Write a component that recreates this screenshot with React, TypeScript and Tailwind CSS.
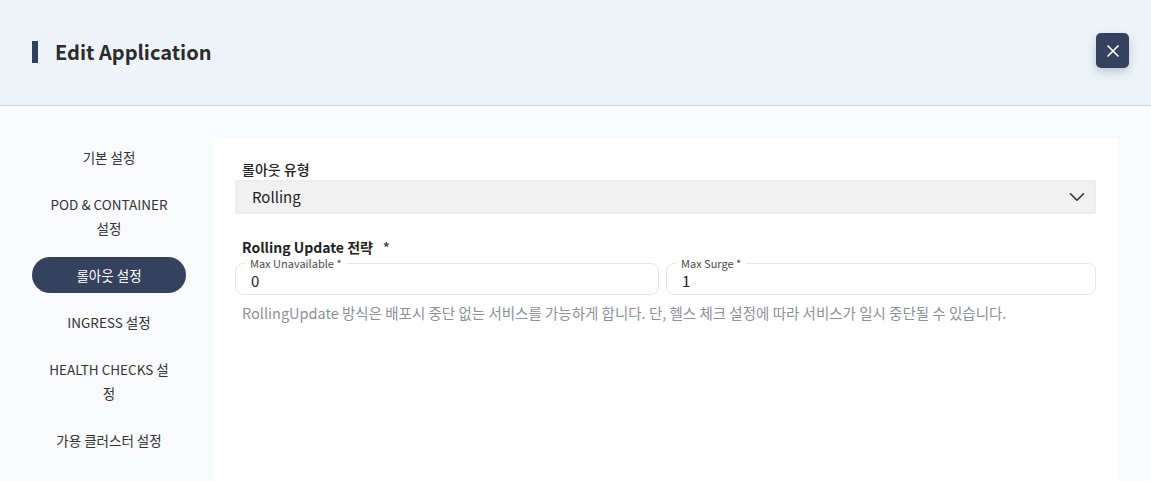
import { X, ChevronDown } from 'lucide-react';

const menu = [
  { label: '기본 설정' },
  { label: 'POD & CONTAINER 설정' },
  { label: '롤아웃 설정', active: true },
  { label: 'INGRESS 설정' },
  { label: 'HEALTH CHECKS 설정' },
  { label: '가용 클러스터 설정' },
];

function OutlinedField({ label, value, grow }: { label: string; value: string; grow: string }) {
  return (
    <div className={`relative ${grow} h-[32px] rounded-lg border border-[#e4e6ea] bg-white`}>
      <span className="absolute -top-[8px] left-[9px] px-[5px] bg-white text-[11px] leading-[14px] text-[#4a4a4a]">
        {label}
      </span>
      <div className="pl-[15px] pt-[7px] text-[15px] leading-[20px] text-[#222]">{value}</div>
    </div>
  );
}

export default function App() {
  return (
    <div
      className="w-[1151px] h-[481px] overflow-hidden bg-[#f8fafc] flex flex-col"
      style={{ fontFamily: '"Noto Sans CJK KR", "Noto Sans", sans-serif' }}
    >
      <header className="h-[106px] shrink-0 bg-[#eef3f8] border-b border-[#d3d7dc] flex items-center justify-between pl-8 pr-[22px]">
        <div className="flex items-center gap-[17px] -mt-[2px]">
          <span className="w-[6px] h-[22px] bg-[#334160]" />
          <h1 className="text-[20px] font-bold text-[#2b2b2b] leading-none">Edit Application</h1>
        </div>
        <button className="w-[33px] h-[35px] rounded-[5px] bg-[#34425e] flex items-center justify-center shadow-[0_4px_10px_rgba(52,66,94,0.25)] -mt-[4px]">
          <X size={20} strokeWidth={2} className="text-white" />
        </button>
      </header>

      <div className="flex flex-1 pt-8 pl-8 pr-[33px] gap-[27px] min-h-0">
        <nav className="w-[154px] shrink-0 flex flex-col gap-[11px] pt-[1px]">
          {menu.map((m) => (
            <div
              key={m.label}
              className={
                m.active
                  ? 'rounded-full bg-[#34425e] text-white text-[13.5px] leading-[24px] text-center px-[15px] py-1.5'
                  : 'text-[#333] text-[13.5px] leading-[24px] text-center px-[15px] py-1.5'
              }
            >
              {m.label}
            </div>
          ))}
        </nav>

        <main className="flex-1 bg-white px-[22px] pt-[21px]">
          <div className="pl-[7px] text-[14px] leading-[21px] font-medium text-[#222]">롤아웃 유형</div>
          <div className="h-[34px] bg-[#eeeeee] p-[1px]">
            <div className="h-full rounded-md bg-[#f1f1f1] border border-[#ebebeb] flex items-center justify-between pl-[15px] pr-[4px]">
              <span className="text-[15px] text-[#222]">Rolling</span>
              <ChevronDown size={26} strokeWidth={1.5} className="text-[#333]" />
            </div>
          </div>

          <div className="mt-[22px] pl-[7px] flex items-center text-[14px] leading-[22px] font-bold text-[#222]">
            Rolling Update 전략
            <span className="ml-[10px] text-[13px] font-bold text-[#444]">*</span>
          </div>
          <div className="mt-[5px] flex gap-[7px]">
            <OutlinedField label="Max Unavailable *" value="0" grow="flex-[424]" />
            <OutlinedField label="Max Surge *" value="1" grow="flex-[430]" />
          </div>
          <p className="mt-[8px] pl-[7px] text-[14.5px] leading-[20px] text-[#8c9099]">
            RollingUpdate 방식은 배포시 중단 없는 서비스를 가능하게 합니다. 단, 헬스 체크 설정에 따라 서비스가 일시 중단될 수 있습니다.
          </p>
        </main>
      </div>
    </div>
  );
}
